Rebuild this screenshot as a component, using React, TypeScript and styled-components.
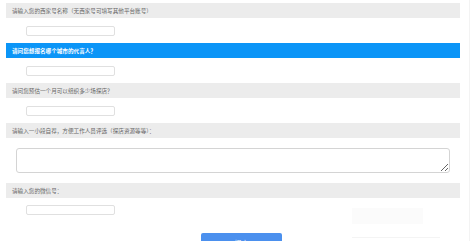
import styled, { createGlobalStyle } from 'styled-components'

const Global = createGlobalStyle`
body {
margin: 0;
background: #fff;
font-family: "Noto Sans CJK SC", "Liberation Sans", sans-serif;
}
`

const Page = styled.div`
position: relative;
width: 470px;
height: 241px;
overflow: hidden;
border-right: 1px solid #f3f3f3;
box-sizing: border-box;
`

const Form = styled.form`
display: flex;
flex-direction: column;
align-items: flex-start;
padding: 3px 9px 0 6px;
`

const Label = styled.div<{ $active?: boolean }>`
width: 100%;
height: 15px;
box-sizing: border-box;
padding-left: 6px;
display: flex;
align-items: center;
font-size: 5.6px;
background: ${(p) => (p.$active ? '#0b95f7' : '#ececec')};
color: ${(p) => (p.$active ? '#fff' : '#666')};
font-weight: ${(p) => (p.$active ? 700 : 400)};
`

const Field = styled.input`
width: 89px;
height: 10px;
box-sizing: border-box;
margin: 8px 0 7px 20px;
border: 1px solid #e0e0e0;
border-radius: 2px;
padding: 0;
outline: none;
`

const LastField = styled(Field)`
margin: 7px 0 18px 20px;
`

const Area = styled.textarea`
width: 434px;
height: 25px;
box-sizing: border-box;
margin: 10px 0 10px 10px;
border: 1px solid #d4d4d4;
border-radius: 3px;
padding: 0;
outline: none;
`

const Submit = styled.button`
width: 81px;
height: 20px;
margin-left: 195px;
border: none;
border-radius: 2px;
background: #4b90ee;
color: #fff;
font-family: "Noto Sans CJK SC", sans-serif;
font-size: 7px;
padding: 0;
`

const Ghost = styled.div`
position: absolute;
left: 352px;
top: 208px;
width: 71px;
height: 16px;
background: #fbfbfb;
`

const GhostLine = styled.div`
position: absolute;
left: 352px;
top: 237px;
width: 88px;
height: 1px;
background: #f4f4f4;
`

const questions = [
  '请输入您的西家号名称（无西家号可填写其他平台账号）',
  '请问您想报名哪个城市的代言人？',
  '请问您预估一个月可以组织多少场探店？',
]

export default function App() {
  return (
    <>
      <Global />
      <Page>
        <Form onSubmit={(e) => e.preventDefault()}>
          {questions.map((q, i) => (
            <div key={q} style={{ display: 'contents' }}>
              <Label $active={i === 1}>{q}</Label>
              <Field type="text" />
            </div>
          ))}
          <Label>请输入一小段自荐，方便工作人员评选（探店资源等等）：</Label>
          <Area />
          <Label>请输入您的微信号：</Label>
          <LastField type="text" />
          <Submit type="submit">提交</Submit>
        </Form>
        <Ghost />
        <GhostLine />
      </Page>
    </>
  )
}
